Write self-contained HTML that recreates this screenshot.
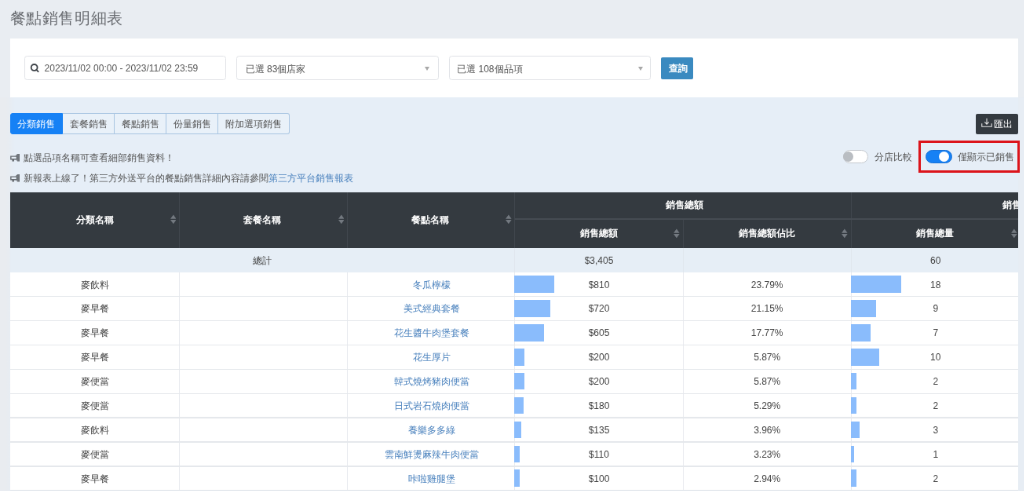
<!DOCTYPE html><html><head><meta charset="utf-8"><style>
*{box-sizing:border-box;margin:0;padding:0}
html,body{width:1024px;height:491px;overflow:hidden}
body{background:#e9edf2;font-family:"Liberation Sans",sans-serif;position:relative}
#w{position:absolute;left:0;top:0;width:1304.459px;height:625.478px;transform:scale(0.785);transform-origin:0 0;font-size:12px;color:#444;will-change:transform}
.a{position:absolute}
.t{position:absolute;white-space:nowrap;line-height:17.834px}
.title{font-size:20.382px;letter-spacing:0.573px;color:#6a6d72;line-height:25.478px}
.inp{position:absolute;border:1px solid #e2e4e8;border-radius:3.5px;background:#fff;top:71.338px;height:30.573px}
.arrow{position:absolute;width:0;height:0;border-left:3.822px solid transparent;border-right:3.822px solid transparent;border-top:5.096px solid #a8a8a8}
.tab{position:absolute;border:1px solid #abc7e3;background:#e9f1f9;color:#555}
.tab.act{background:#1681f5;border-color:#1681f5;color:#fff}
.link{color:#4a82be}
.th{color:#fff;font-weight:bold;text-align:center}
.td{text-align:center;color:#444}
.td.link{color:#4a82be}
.vl{position:absolute;width:1px;background:#4a5158}
.hl{position:absolute;height:1px;background:#4a5158}
.rl{position:absolute;height:1px;background:#e3e6ea}
.cl{position:absolute;width:1px;background:#e3e6ea}
.bar{position:absolute;background:#8abcfc}
</style></head><body><div id="w">
<div class="t title" style="left:12.739px;top:15.287px;line-height:25.478px;top:10.955px">餐點銷售明細表</div>
<div class="a" style="left:12.739px;top:123.567px;width:1284.076px;height:501.911px;background:#e6eef7"></div>
<div class="a" style="left:1296.815px;top:123.567px;width:7.643px;height:501.911px;background:#e7edf4"></div>
<div class="a" style="left:0.000px;top:123.567px;width:17.834px;height:501.911px;background:linear-gradient(to right,#e9ecf0 0%,#e9ecf0 45%,#e6eef7 100%)"></div>
<div class="a" style="left:12.739px;top:48.790px;width:1284.076px;height:75.414px;background:#fff"></div>
<div class="inp" style="left:30.573px;width:257.325px"></div>
<svg class="a" style="left:36.943px;top:79.618px;width:12.739px;height:12.739px" viewBox="0 0 10 10"><circle cx="5.2" cy="4.7" r="3.1" fill="none" stroke="#3d4248" stroke-width="1.45"/><path d="M7.4 7 L9.1 8.7" stroke="#3d4248" stroke-width="1.5" stroke-linecap="round"/></svg>
<div class="t" style="left:56.561px;top:78.981px;color:#555">2023/11/02 00:00 - 2023/11/02 23:59</div>
<div class="inp" style="left:301.401px;width:257.325px"></div>
<div class="t" style="left:312.739px;top:80.255px;color:#555">已選 83個店家</div>
<div class="arrow" style="left:541.401px;top:84.713px"></div>
<div class="inp" style="left:571.975px;width:257.325px"></div>
<div class="t" style="left:582.166px;top:80.255px;color:#555">已選 108個品項</div>
<div class="arrow" style="left:812.739px;top:84.713px"></div>
<div class="a" style="left:842.038px;top:72.611px;width:40.764px;height:28.025px;background:#3a8ac0;border-radius:2px"></div>
<div class="t" style="left:843.312px;width:40.764px;top:78.981px;text-align:center;color:#fff;font-weight:bold">查詢</div>
<div class="tab act" style="left:12.739px;top:144.076px;width:66.879px;height:27.006px;border-radius:3px 0 0 3px;"></div>
<div class="t" style="left:12.739px;width:66.879px;top:150.318px;text-align:center;color:#fff">分類銷售</div>
<div class="tab" style="left:79.618px;top:144.076px;width:66.369px;height:27.006px;border-left:none;"></div>
<div class="t" style="left:79.618px;width:66.369px;top:150.318px;text-align:center;color:#555">套餐銷售</div>
<div class="tab" style="left:145.987px;top:144.076px;width:65.987px;height:27.006px;border-left:none;"></div>
<div class="t" style="left:145.987px;width:65.987px;top:150.318px;text-align:center;color:#555">餐點銷售</div>
<div class="tab" style="left:211.975px;top:144.076px;width:65.987px;height:27.006px;border-left:none;"></div>
<div class="t" style="left:211.975px;width:65.987px;top:150.318px;text-align:center;color:#555">份量銷售</div>
<div class="tab" style="left:277.962px;top:144.076px;width:90.828px;height:27.006px;border-radius:0 3px 3px 0;border-left:none;"></div>
<div class="t" style="left:277.962px;width:90.828px;top:150.318px;text-align:center;color:#555">附加選項銷售</div>
<div class="a" style="left:1243.312px;top:145.223px;width:53.503px;height:25.987px;background:#343a40;border-radius:2px"></div>
<svg class="a" style="left:1249.682px;top:150.318px;width:14.013px;height:12.739px" viewBox="0 0 11 10"><path d="M5.5 0.5 V6.3 M3.4 4.3 L5.5 6.4 L7.6 4.3" fill="none" stroke="#e8e8e8" stroke-width="0.85"/><path d="M0.6 5.6 V8.8 H10.4 V5.6" fill="none" stroke="#e8e8e8" stroke-width="0.85"/></svg>
<div class="t" style="left:1266.242px;top:150.318px;color:#fff">匯出</div>
<svg class="a" style="left:12.739px;top:196.178px;width:12.739px;height:10.191px" viewBox="0 0 10 8"><path d="M0.65 2.45 H6.6 V5.35 H0.65Z" fill="none" stroke="#676c72" stroke-width="1.1"/><path d="M7 0 H10 V7.5 H7Z" fill="#70757b"/><path d="M5.6 2.2 L7.2 0.7" stroke="#676c72" stroke-width="1"/><path d="M5.6 5.6 L7.2 6.8" stroke="#8a8f94" stroke-width="0.8"/><path d="M1.9 5.4 H3.9 V7.5 H1.9Z" fill="#676c72"/></svg>
<div class="t" style="left:30.191px;top:192.611px;color:#555">點選品項名稱可查看細部銷售資料！</div>
<svg class="a" style="left:12.739px;top:222.038px;width:12.739px;height:10.191px" viewBox="0 0 10 8"><path d="M0.65 2.45 H6.6 V5.35 H0.65Z" fill="none" stroke="#676c72" stroke-width="1.1"/><path d="M7 0 H10 V7.5 H7Z" fill="#70757b"/><path d="M5.6 2.2 L7.2 0.7" stroke="#676c72" stroke-width="1"/><path d="M5.6 5.6 L7.2 6.8" stroke="#8a8f94" stroke-width="0.8"/><path d="M1.9 5.4 H3.9 V7.5 H1.9Z" fill="#676c72"/></svg>
<div class="t" style="left:30.191px;top:218.599px;color:#555">新報表上線了！第三方外送平台的餐點銷售詳細內容請參閱<span class="link">第三方平台銷售報表</span></div>
<div class="a" style="left:1073.631px;top:191.338px;width:32.611px;height:17.070px;background:#fff;border:1px solid #c6cacf;border-radius:8.917px"></div>
<div class="a" style="left:1074.395px;top:193.376px;width:12.994px;height:12.994px;background:#b9bdc2;border-radius:50%"></div>
<div class="t" style="left:1114.013px;top:192.357px;color:#555">分店比較</div>
<div class="a" style="left:1179.108px;top:191.465px;width:34.395px;height:16.943px;background:#1681f5;border:1px solid #1a72d6;border-radius:8.917px"></div>
<div class="a" style="left:1195.924px;top:193.248px;width:13.248px;height:13.248px;background:#fff;border-radius:50%"></div>
<div class="t" style="left:1220.382px;top:192.357px;color:#555">僅顯示已銷售</div>
<div class="a" style="left:1170.446px;top:178.599px;width:128.917px;height:41.274px;border:3.567px solid #dc141b"></div>
<div class="a" style="left:12.739px;top:244.586px;width:1284.076px;height:71.338px;background:#343a40"></div>
<div class="a" style="left:227.771px;top:244.586px;width:1.274px;height:71.338px;background:#41474e"></div>
<div class="a" style="left:442.038px;top:244.586px;width:1.274px;height:71.338px;background:#41474e"></div>
<div class="a" style="left:655.159px;top:244.586px;width:1.274px;height:71.338px;background:#41474e"></div>
<div class="a" style="left:1083.567px;top:244.586px;width:1.274px;height:71.338px;background:#41474e"></div>
<div class="a" style="left:869.554px;top:278.981px;width:1.274px;height:36.943px;background:#41474e"></div>
<div class="a" style="left:655.796px;top:278.344px;width:641.019px;height:1.274px;background:#464c53"></div>
<div class="t th" style="left:12.739px;width:215.669px;top:271.720px;text-align:center;">分類名稱</div><svg class="a" style="left:216.561px;top:272.611px;width:7.643px;height:12.739px" viewBox="0 0 6 10"><path d="M0 4.55 L3 0.4 L6 4.55Z M0 5.45 L3 9.6 L6 5.45Z" fill="#737980"/></svg>
<div class="t th" style="left:226.497px;width:214.268px;top:271.720px;text-align:center;">套餐名稱</div><svg class="a" style="left:430.828px;top:272.611px;width:7.643px;height:12.739px" viewBox="0 0 6 10"><path d="M0 4.55 L3 0.4 L6 4.55Z M0 5.45 L3 9.6 L6 5.45Z" fill="#737980"/></svg>
<div class="t th" style="left:441.401px;width:213.121px;top:271.720px;text-align:center;">餐點名稱</div><svg class="a" style="left:643.949px;top:272.611px;width:7.643px;height:12.739px" viewBox="0 0 6 10"><path d="M0 4.55 L3 0.4 L6 4.55Z M0 5.45 L3 9.6 L6 5.45Z" fill="#737980"/></svg>
<div class="t th" style="left:657.707px;width:428.408px;top:253.248px;text-align:center;">銷售總額</div>
<div class="t th" style="left:655.796px;width:214.395px;top:288.917px;text-align:center;">銷售總額</div><svg class="a" style="left:858.344px;top:291.083px;width:7.643px;height:12.739px" viewBox="0 0 6 10"><path d="M0 4.55 L3 0.4 L6 4.55Z M0 5.45 L3 9.6 L6 5.45Z" fill="#737980"/></svg>
<div class="t th" style="left:870.191px;width:214.013px;top:288.917px;text-align:center;">銷售總額佔比</div><svg class="a" style="left:1072.357px;top:291.083px;width:7.643px;height:12.739px" viewBox="0 0 6 10"><path d="M0 4.55 L3 0.4 L6 4.55Z M0 5.45 L3 9.6 L6 5.45Z" fill="#737980"/></svg>
<div class="t th" style="left:1084.204px;width:212.611px;top:288.917px;text-align:center;">銷售總量</div>
<svg class="a" style="left:1288.280px;top:291.083px;width:7.643px;height:12.739px" viewBox="0 0 6 10"><path d="M0 4.55 L3 0.4 L6 4.55Z M0 5.45 L3 9.6 L6 5.45Z" fill="#737980"/></svg>
<div class="a" style="left:1084.204px;top:244.586px;width:212.611px;height:34.395px;overflow:hidden"><div class="t th" style="left:2.930px;width:428.025px;top:8.662px;text-align:center;">銷售總量</div></div>
<div class="a" style="left:12.739px;top:315.924px;width:1284.076px;height:30.828px;background:#e6eef6"></div>
<div class="a" style="left:655.159px;top:315.924px;width:1.274px;height:30.828px;background:#e1e7ee"></div>
<div class="a" style="left:869.554px;top:315.924px;width:1.274px;height:30.828px;background:#e1e7ee"></div>
<div class="a" style="left:1083.567px;top:315.924px;width:1.274px;height:30.828px;background:#e1e7ee"></div>
<div class="t" style="left:12.739px;width:643.057px;top:323.694px;text-align:center;">總計</div>
<div class="t" style="left:655.796px;width:214.395px;top:323.694px;text-align:center;">$3,405</div>
<div class="t" style="left:1085.478px;width:212.611px;top:323.694px;text-align:center;">60</div>
<div class="a" style="left:12.739px;top:346.752px;width:1284.076px;height:278.726px;background:#fff"></div>
<div class="a" style="left:227.771px;top:346.752px;width:1.274px;height:278.726px;background:#e9ebef"></div>
<div class="a" style="left:442.038px;top:346.752px;width:1.274px;height:278.726px;background:#e9ebef"></div>
<div class="a" style="left:655.159px;top:346.752px;width:1.274px;height:278.726px;background:#e9ebef"></div>
<div class="a" style="left:869.554px;top:346.752px;width:1.274px;height:278.726px;background:#e9ebef"></div>
<div class="a" style="left:1083.567px;top:346.752px;width:1.274px;height:278.726px;background:#e9ebef"></div>
<div class="a" style="left:654.904px;top:351.338px;width:51.514px;height:21.529px;background:#8abcfc"></div>
<div class="a" style="left:1083.822px;top:351.338px;width:64.166px;height:21.529px;background:#8abcfc"></div>
<div class="t td" style="left:12.739px;width:215.669px;top:354.554px;text-align:center;">麥飲料</div>
<div class="t td link" style="left:443.949px;width:213.121px;top:354.554px;text-align:center;">冬瓜檸檬</div>
<div class="t td" style="left:655.796px;width:214.395px;top:354.554px;text-align:center;">$810</div>
<div class="t td" style="left:870.191px;width:214.013px;top:354.554px;text-align:center;">23.79%</div>
<div class="t td" style="left:1085.478px;width:212.611px;top:354.554px;text-align:center;">18</div>
<div class="a" style="left:12.739px;top:377.006px;width:1284.076px;height:1.274px;background:#e5e8ec"></div>
<div class="a" style="left:654.904px;top:382.229px;width:45.854px;height:21.529px;background:#8abcfc"></div>
<div class="a" style="left:1083.822px;top:382.229px;width:32.274px;height:21.529px;background:#8abcfc"></div>
<div class="t td" style="left:12.739px;width:215.669px;top:385.446px;text-align:center;">麥早餐</div>
<div class="t td link" style="left:443.949px;width:213.121px;top:385.446px;text-align:center;">美式經典套餐</div>
<div class="t td" style="left:655.796px;width:214.395px;top:385.446px;text-align:center;">$720</div>
<div class="t td" style="left:870.191px;width:214.013px;top:385.446px;text-align:center;">21.15%</div>
<div class="t td" style="left:1085.478px;width:212.611px;top:385.446px;text-align:center;">9</div>
<div class="a" style="left:12.739px;top:407.898px;width:1284.076px;height:1.274px;background:#e5e8ec"></div>
<div class="a" style="left:654.904px;top:413.121px;width:38.608px;height:21.529px;background:#8abcfc"></div>
<div class="a" style="left:1083.822px;top:413.121px;width:25.187px;height:21.529px;background:#8abcfc"></div>
<div class="t td" style="left:12.739px;width:215.669px;top:416.338px;text-align:center;">麥早餐</div>
<div class="t td link" style="left:443.949px;width:213.121px;top:416.338px;text-align:center;">花生醬牛肉堡套餐</div>
<div class="t td" style="left:655.796px;width:214.395px;top:416.338px;text-align:center;">$605</div>
<div class="t td" style="left:870.191px;width:214.013px;top:416.338px;text-align:center;">17.77%</div>
<div class="t td" style="left:1085.478px;width:212.611px;top:416.338px;text-align:center;">7</div>
<div class="a" style="left:12.739px;top:438.790px;width:1284.076px;height:1.274px;background:#e5e8ec"></div>
<div class="a" style="left:654.904px;top:444.013px;width:13.095px;height:21.529px;background:#8abcfc"></div>
<div class="a" style="left:1083.822px;top:444.013px;width:35.817px;height:21.529px;background:#8abcfc"></div>
<div class="t td" style="left:12.739px;width:215.669px;top:447.229px;text-align:center;">麥早餐</div>
<div class="t td link" style="left:443.949px;width:213.121px;top:447.229px;text-align:center;">花生厚片</div>
<div class="t td" style="left:655.796px;width:214.395px;top:447.229px;text-align:center;">$200</div>
<div class="t td" style="left:870.191px;width:214.013px;top:447.229px;text-align:center;">5.87%</div>
<div class="t td" style="left:1085.478px;width:212.611px;top:447.229px;text-align:center;">10</div>
<div class="a" style="left:12.739px;top:469.682px;width:1284.076px;height:1.274px;background:#e5e8ec"></div>
<div class="a" style="left:654.904px;top:474.904px;width:13.095px;height:21.529px;background:#8abcfc"></div>
<div class="a" style="left:1083.822px;top:474.904px;width:7.469px;height:21.529px;background:#8abcfc"></div>
<div class="t td" style="left:12.739px;width:215.669px;top:478.121px;text-align:center;">麥便當</div>
<div class="t td link" style="left:443.949px;width:213.121px;top:478.121px;text-align:center;">韓式燒烤豬肉便當</div>
<div class="t td" style="left:655.796px;width:214.395px;top:478.121px;text-align:center;">$200</div>
<div class="t td" style="left:870.191px;width:214.013px;top:478.121px;text-align:center;">5.87%</div>
<div class="t td" style="left:1085.478px;width:212.611px;top:478.121px;text-align:center;">2</div>
<div class="a" style="left:12.739px;top:500.573px;width:1284.076px;height:1.274px;background:#e5e8ec"></div>
<div class="a" style="left:654.904px;top:505.796px;width:11.851px;height:21.529px;background:#8abcfc"></div>
<div class="a" style="left:1083.822px;top:505.796px;width:7.469px;height:21.529px;background:#8abcfc"></div>
<div class="t td" style="left:12.739px;width:215.669px;top:509.013px;text-align:center;">麥便當</div>
<div class="t td link" style="left:443.949px;width:213.121px;top:509.013px;text-align:center;">日式岩石燒肉便當</div>
<div class="t td" style="left:655.796px;width:214.395px;top:509.013px;text-align:center;">$180</div>
<div class="t td" style="left:870.191px;width:214.013px;top:509.013px;text-align:center;">5.29%</div>
<div class="t td" style="left:1085.478px;width:212.611px;top:509.013px;text-align:center;">2</div>
<div class="a" style="left:12.739px;top:531.465px;width:1284.076px;height:1.274px;background:#e5e8ec"></div>
<div class="a" style="left:654.904px;top:536.688px;width:9.000px;height:21.529px;background:#8abcfc"></div>
<div class="a" style="left:1083.822px;top:536.688px;width:11.013px;height:21.529px;background:#8abcfc"></div>
<div class="t td" style="left:12.739px;width:215.669px;top:539.904px;text-align:center;">麥飲料</div>
<div class="t td link" style="left:443.949px;width:213.121px;top:539.904px;text-align:center;">養樂多多綠</div>
<div class="t td" style="left:655.796px;width:214.395px;top:539.904px;text-align:center;">$135</div>
<div class="t td" style="left:870.191px;width:214.013px;top:539.904px;text-align:center;">3.96%</div>
<div class="t td" style="left:1085.478px;width:212.611px;top:539.904px;text-align:center;">3</div>
<div class="a" style="left:12.739px;top:562.357px;width:1284.076px;height:1.274px;background:#e5e8ec"></div>
<div class="a" style="left:654.904px;top:567.580px;width:7.435px;height:21.529px;background:#8abcfc"></div>
<div class="a" style="left:1083.822px;top:567.580px;width:3.926px;height:21.529px;background:#8abcfc"></div>
<div class="t td" style="left:12.739px;width:215.669px;top:570.796px;text-align:center;">麥便當</div>
<div class="t td link" style="left:443.949px;width:213.121px;top:570.796px;text-align:center;">雲南鮮燙麻辣牛肉便當</div>
<div class="t td" style="left:655.796px;width:214.395px;top:570.796px;text-align:center;">$110</div>
<div class="t td" style="left:870.191px;width:214.013px;top:570.796px;text-align:center;">3.23%</div>
<div class="t td" style="left:1085.478px;width:212.611px;top:570.796px;text-align:center;">1</div>
<div class="a" style="left:12.739px;top:593.248px;width:1284.076px;height:1.274px;background:#e5e8ec"></div>
<div class="a" style="left:654.904px;top:598.471px;width:6.813px;height:21.529px;background:#8abcfc"></div>
<div class="a" style="left:1083.822px;top:598.471px;width:7.469px;height:21.529px;background:#8abcfc"></div>
<div class="t td" style="left:12.739px;width:215.669px;top:601.688px;text-align:center;">麥早餐</div>
<div class="t td link" style="left:443.949px;width:213.121px;top:601.688px;text-align:center;">咔啦雞腿堡</div>
<div class="t td" style="left:655.796px;width:214.395px;top:601.688px;text-align:center;">$100</div>
<div class="t td" style="left:870.191px;width:214.013px;top:601.688px;text-align:center;">2.94%</div>
<div class="t td" style="left:1085.478px;width:212.611px;top:601.688px;text-align:center;">2</div>
<div class="a" style="left:12.739px;top:624.140px;width:1284.076px;height:1.274px;background:#e5e8ec"></div>
<div class="t td" style="left:12.739px;width:215.669px;top:632.580px;text-align:center;">麥早餐</div>
<div class="t td link" style="left:443.949px;width:213.121px;top:632.580px;text-align:center;"></div>
<div class="t td" style="left:655.796px;width:214.395px;top:632.580px;text-align:center;"></div>
<div class="t td" style="left:870.191px;width:214.013px;top:632.580px;text-align:center;"></div>
<div class="t td" style="left:1085.478px;width:212.611px;top:632.580px;text-align:center;"></div>
<div class="a" style="left:12.739px;top:624.968px;width:1284.076px;height:2.548px;background:#e7eef5"></div>
</div></body></html>
